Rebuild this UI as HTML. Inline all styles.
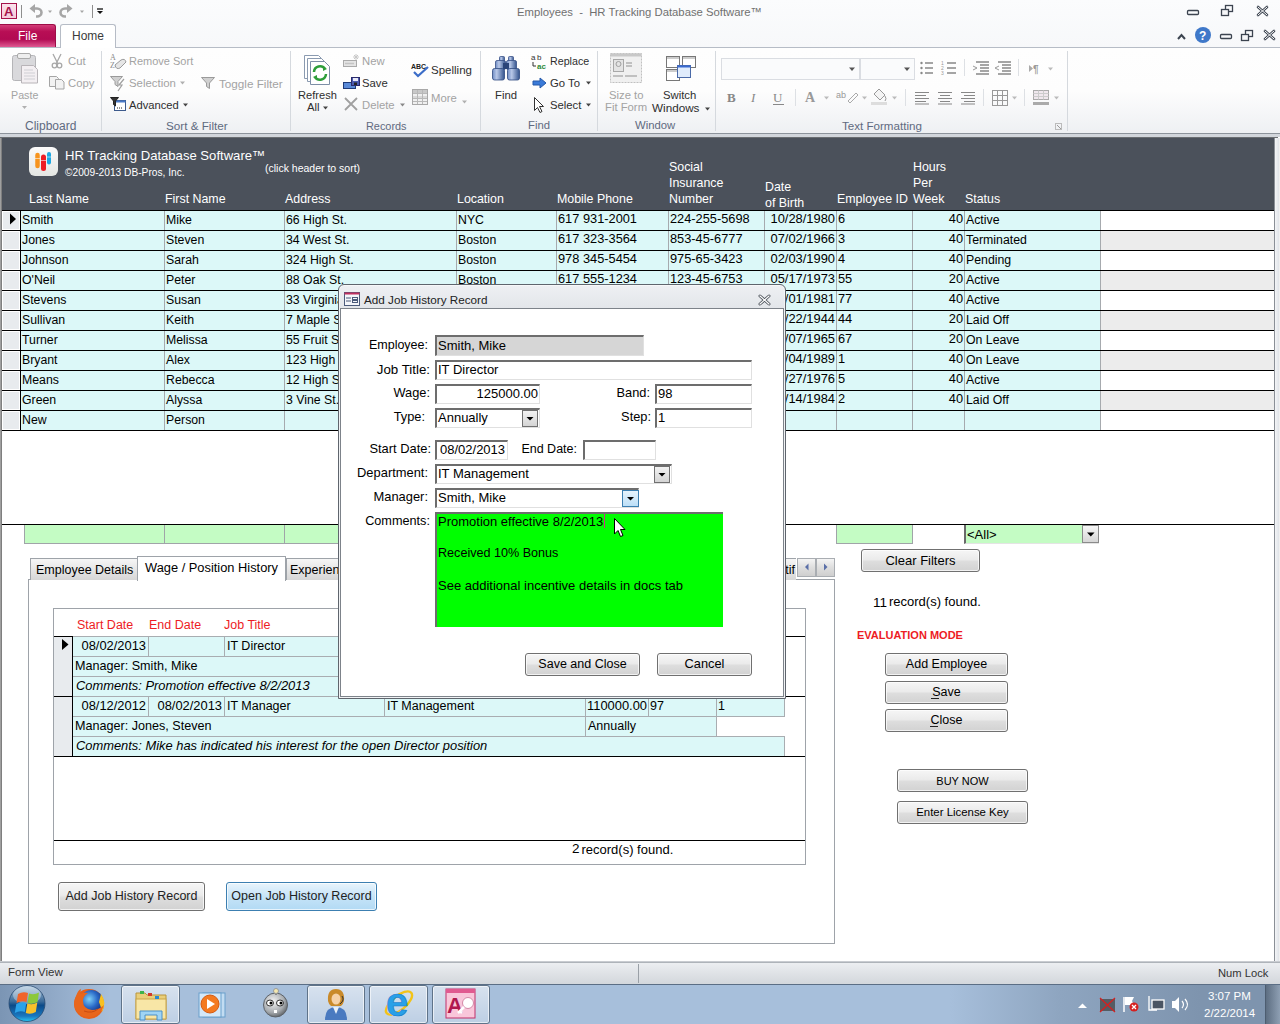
<!DOCTYPE html><html><head><meta charset="utf-8"><style>
html,body{margin:0;padding:0;width:1280px;height:1024px;overflow:hidden;background:#fff;position:relative;font-family:"Liberation Sans",sans-serif;}
.t{position:absolute;white-space:pre;line-height:1;}
.r{position:absolute;box-sizing:border-box;}
svg{position:absolute;overflow:visible;}
</style></head><body>
<div class="r" style="left:0px;top:0px;width:1280px;height:47px;background:linear-gradient(#fbfcfd,#f7f8fa);"></div>
<div class="r" style="left:1px;top:3px;width:16px;height:16px;background:linear-gradient(#fbe3ec,#f6c9d9);border:1px solid #a5124a;"></div>
<div class="t" style="left:4px;top:5.00px;font-size:13px;color:#a5124a;font-weight:bold;font-style:normal;">A</div>
<div class="r" style="left:21px;top:5px;width:1px;height:13px;background:#8e8e8e;"></div>
<div class="r" style="left:92px;top:5px;width:1px;height:13px;background:#8e8e8e;"></div>
<div class="t" style="left:517px;top:7.43px;font-size:11.3px;color:#707070;font-weight:normal;font-style:normal;">Employees  -  HR Tracking Database Software™</div>
<svg style="left:0;top:0" width="1280" height="60"><rect x="1187.5" y="10.5" width="11" height="4" rx="1" fill="none" stroke="#3c4450" stroke-width="1.3"/><rect x="1225.5" y="5.5" width="7" height="6" fill="none" stroke="#3c4450" stroke-width="1.3"/><rect x="1221.5" y="9.5" width="7" height="6" fill="#f5f6f8" stroke="#3c4450" stroke-width="1.3"/><path d="M1258 7 L1267 15 M1267 7 L1258 15" stroke="#3c4450" stroke-width="2.6" stroke-linecap="round"/><path d="M1258 7 L1267 15 M1267 7 L1258 15" stroke="#fff" stroke-width="1" stroke-linecap="round"/><path d="M1178 39 L1181.5 35 L1185 39" fill="none" stroke="#3c4450" stroke-width="2"/><circle cx="1203" cy="35" r="8" fill="#3f78c9"/><text x="1199" y="40" font-family="Liberation Sans" font-weight="bold" font-size="12" fill="#fff">?</text><rect x="1220.5" y="34.5" width="11" height="4" rx="1" fill="none" stroke="#3c4450" stroke-width="1.3"/><rect x="1245.5" y="30.5" width="7" height="6" fill="none" stroke="#3c4450" stroke-width="1.3"/><rect x="1241.5" y="34.5" width="7" height="6" fill="#f5f6f8" stroke="#3c4450" stroke-width="1.3"/><path d="M1265 31 L1274 39 M1274 31 L1265 39" stroke="#3c4450" stroke-width="2.6" stroke-linecap="round"/><path d="M1265 31 L1274 39 M1274 31 L1265 39" stroke="#fff" stroke-width="1" stroke-linecap="round"/></svg>
<div class="r" style="left:0px;top:24px;width:56px;height:23px;background:linear-gradient(#d23c78,#b80e55 30%,#b20a52 65%,#e05a92);border:1px solid #9c0c46;border-left:none;border-bottom:none;border-radius:0 3px 0 0;"></div>
<div class="t" style="left:18px;top:29.84px;font-size:12px;color:#fff;font-weight:normal;font-style:normal;">File</div>
<div class="r" style="left:0px;top:47px;width:1280px;height:1px;background:#b6bcc6;"></div>
<div class="r" style="left:60px;top:24px;width:56px;height:25px;background:#fff;border:1px solid #b6bcc6;border-bottom:none;border-radius:3px 3px 0 0;"></div>
<div class="t" style="left:72px;top:29.84px;font-size:12px;color:#3b3b3b;font-weight:normal;font-style:normal;">Home</div>
<div class="r" style="left:0px;top:48px;width:1280px;height:85px;background:linear-gradient(#fefefe 0%,#fdfdfd 50%,#eef0f3 100%);"></div>
<div class="r" style="left:0px;top:133px;width:1280px;height:1px;background:#8d939b;"></div>
<div class="r" style="left:0px;top:134px;width:1280px;height:3px;background:#d2d6dc;"></div>
<div class="r" style="left:0px;top:137px;width:1278px;height:1px;background:#6b6e72;"></div>
<div class="r" style="left:101px;top:51px;width:1px;height:80px;background:#d5d9de;"></div>
<div class="r" style="left:290px;top:51px;width:1px;height:80px;background:#d5d9de;"></div>
<div class="r" style="left:480px;top:51px;width:1px;height:80px;background:#d5d9de;"></div>
<div class="r" style="left:597px;top:51px;width:1px;height:80px;background:#d5d9de;"></div>
<div class="r" style="left:715px;top:51px;width:1px;height:80px;background:#d5d9de;"></div>
<div class="r" style="left:1067px;top:51px;width:1px;height:80px;background:#d5d9de;"></div>
<div class="r" style="left:0px;top:138px;width:1280px;height:824px;background:#fff;"></div>
<div class="r" style="left:0px;top:138px;width:2px;height:824px;background:linear-gradient(90deg,#b0b0b0,#6e6e6e);"></div>
<div class="r" style="left:1274px;top:138px;width:1px;height:824px;background:#8a8f96;"></div>
<div class="r" style="left:1275px;top:138px;width:4px;height:824px;background:linear-gradient(90deg,#f4f5f7,#dfe3e8);"></div>
<div class="r" style="left:1279px;top:138px;width:1px;height:824px;background:#f0f0f0;"></div>
<div class="r" style="left:2px;top:138px;width:1272px;height:72px;background:#4b515b;"></div>
<div class="r" style="left:29px;top:147px;width:29px;height:29px;border-radius:6px;background:linear-gradient(#fafafa,#e4e6e3);"></div>
<svg style="left:29px;top:147px" width="29" height="29"><line x1="8.5" y1="8" x2="8.5" y2="19" stroke="#f7941d" stroke-width="4.5" stroke-linecap="round"/><line x1="14.5" y1="10" x2="14.5" y2="21.5" stroke="#ed1c24" stroke-width="5" stroke-linecap="round"/><line x1="20" y1="7" x2="20" y2="15.5" stroke="#1ea7e1" stroke-width="4" stroke-linecap="round"/><path d="M6 11.5 h5 M12 13.5 h5 M18 10 h4" stroke="#fff" stroke-width="0.8" opacity="0.7"/></svg>
<div class="t" style="left:65px;top:148.91px;font-size:13.1px;color:#fff;font-weight:normal;font-style:normal;">HR Tracking Database Software™</div>
<div class="t" style="left:65px;top:167.87px;font-size:10.2px;color:#fff;font-weight:normal;font-style:normal;">©2009-2013 DB-Pros, Inc.</div>
<div class="t" style="left:265px;top:163.11px;font-size:10.5px;color:#fff;font-weight:normal;font-style:normal;">(click header to sort)</div>
<div class="t" style="left:29px;top:192.50px;font-size:12.4px;color:#fff;font-weight:normal;font-style:normal;">Last Name</div>
<div class="t" style="left:165px;top:192.50px;font-size:12.4px;color:#fff;font-weight:normal;font-style:normal;">First Name</div>
<div class="t" style="left:285px;top:192.50px;font-size:12.4px;color:#fff;font-weight:normal;font-style:normal;">Address</div>
<div class="t" style="left:457px;top:192.50px;font-size:12.4px;color:#fff;font-weight:normal;font-style:normal;">Location</div>
<div class="t" style="left:557px;top:192.50px;font-size:12.4px;color:#fff;font-weight:normal;font-style:normal;">Mobile Phone</div>
<div class="t" style="left:837px;top:192.50px;font-size:12.4px;color:#fff;font-weight:normal;font-style:normal;">Employee ID</div>
<div class="t" style="left:965px;top:192.50px;font-size:12.4px;color:#fff;font-weight:normal;font-style:normal;">Status</div>
<div class="t" style="left:669px;top:160.50px;font-size:12.4px;color:#fff;font-weight:normal;font-style:normal;">Social</div>
<div class="t" style="left:669px;top:176.50px;font-size:12.4px;color:#fff;font-weight:normal;font-style:normal;">Insurance</div>
<div class="t" style="left:669px;top:192.50px;font-size:12.4px;color:#fff;font-weight:normal;font-style:normal;">Number</div>
<div class="t" style="left:765px;top:180.50px;font-size:12.4px;color:#fff;font-weight:normal;font-style:normal;">Date</div>
<div class="t" style="left:765px;top:196.50px;font-size:12.4px;color:#fff;font-weight:normal;font-style:normal;">of Birth</div>
<div class="t" style="left:913px;top:160.50px;font-size:12.4px;color:#fff;font-weight:normal;font-style:normal;">Hours</div>
<div class="t" style="left:913px;top:176.50px;font-size:12.4px;color:#fff;font-weight:normal;font-style:normal;">Per</div>
<div class="t" style="left:913px;top:192.50px;font-size:12.4px;color:#fff;font-weight:normal;font-style:normal;">Week</div>
<div class="r" style="left:2px;top:210px;width:1272px;height:1px;background:#000;"></div>
<div class="r" style="left:2px;top:211px;width:18px;height:19px;background:#e8ebee;border:1px solid #fff;"></div>
<div class="r" style="left:20px;top:211px;width:1px;height:19px;background:#000;"></div>
<div class="r" style="left:21px;top:211px;width:1079px;height:19px;background:#dcf8f8;"></div>
<div class="r" style="left:1100px;top:211px;width:174px;height:19px;background:#fff;"></div>
<div class="r" style="left:164px;top:211px;width:1px;height:19px;background:#a6aaae;"></div>
<div class="r" style="left:284px;top:211px;width:1px;height:19px;background:#a6aaae;"></div>
<div class="r" style="left:456px;top:211px;width:1px;height:19px;background:#a6aaae;"></div>
<div class="r" style="left:556px;top:211px;width:1px;height:19px;background:#a6aaae;"></div>
<div class="r" style="left:668px;top:211px;width:1px;height:19px;background:#a6aaae;"></div>
<div class="r" style="left:764px;top:211px;width:1px;height:19px;background:#a6aaae;"></div>
<div class="r" style="left:836px;top:211px;width:1px;height:19px;background:#a6aaae;"></div>
<div class="r" style="left:912px;top:211px;width:1px;height:19px;background:#a6aaae;"></div>
<div class="r" style="left:964px;top:211px;width:1px;height:19px;background:#a6aaae;"></div>
<div class="r" style="left:1100px;top:211px;width:1px;height:19px;background:#a6aaae;"></div>
<div class="t" style="left:22px;top:213.59px;font-size:12.3px;color:#000;font-weight:normal;font-style:normal;">Smith</div>
<div class="t" style="left:166px;top:213.59px;font-size:12.3px;color:#000;font-weight:normal;font-style:normal;">Mike</div>
<div class="t" style="left:286px;top:213.59px;font-size:12.3px;color:#000;font-weight:normal;font-style:normal;">66 High St.</div>
<div class="t" style="left:458px;top:213.59px;font-size:12.3px;color:#000;font-weight:normal;font-style:normal;">NYC</div>
<div class="t" style="left:558px;top:213.16px;font-size:12.8px;color:#000;font-weight:normal;font-style:normal;">617 931-2001</div>
<div class="t" style="left:670px;top:213.16px;font-size:12.8px;color:#000;font-weight:normal;font-style:normal;">224-255-5698</div>
<div class="t" style="width:80px;text-align:right;left:755px;top:213.08px;font-size:12.9px;color:#000;font-weight:normal;font-style:normal;">10/28/1980</div>
<div class="t" style="left:838px;top:213.16px;font-size:12.8px;color:#000;font-weight:normal;font-style:normal;">6</div>
<div class="t" style="width:40px;text-align:right;left:923px;top:213.16px;font-size:12.8px;color:#000;font-weight:normal;font-style:normal;">40</div>
<div class="t" style="left:966px;top:213.59px;font-size:12.3px;color:#000;font-weight:normal;font-style:normal;">Active</div>
<div class="r" style="left:2px;top:230px;width:1272px;height:1px;background:#000;"></div>
<div class="r" style="left:2px;top:231px;width:18px;height:19px;background:#e8ebee;border:1px solid #fff;"></div>
<div class="r" style="left:20px;top:231px;width:1px;height:19px;background:#000;"></div>
<div class="r" style="left:21px;top:231px;width:1079px;height:19px;background:#dcf8f8;"></div>
<div class="r" style="left:1100px;top:231px;width:174px;height:19px;background:#ececec;"></div>
<div class="r" style="left:164px;top:231px;width:1px;height:19px;background:#a6aaae;"></div>
<div class="r" style="left:284px;top:231px;width:1px;height:19px;background:#a6aaae;"></div>
<div class="r" style="left:456px;top:231px;width:1px;height:19px;background:#a6aaae;"></div>
<div class="r" style="left:556px;top:231px;width:1px;height:19px;background:#a6aaae;"></div>
<div class="r" style="left:668px;top:231px;width:1px;height:19px;background:#a6aaae;"></div>
<div class="r" style="left:764px;top:231px;width:1px;height:19px;background:#a6aaae;"></div>
<div class="r" style="left:836px;top:231px;width:1px;height:19px;background:#a6aaae;"></div>
<div class="r" style="left:912px;top:231px;width:1px;height:19px;background:#a6aaae;"></div>
<div class="r" style="left:964px;top:231px;width:1px;height:19px;background:#a6aaae;"></div>
<div class="r" style="left:1100px;top:231px;width:1px;height:19px;background:#a6aaae;"></div>
<div class="t" style="left:22px;top:233.59px;font-size:12.3px;color:#000;font-weight:normal;font-style:normal;">Jones</div>
<div class="t" style="left:166px;top:233.59px;font-size:12.3px;color:#000;font-weight:normal;font-style:normal;">Steven</div>
<div class="t" style="left:286px;top:233.59px;font-size:12.3px;color:#000;font-weight:normal;font-style:normal;">34 West St.</div>
<div class="t" style="left:458px;top:233.59px;font-size:12.3px;color:#000;font-weight:normal;font-style:normal;">Boston</div>
<div class="t" style="left:558px;top:233.16px;font-size:12.8px;color:#000;font-weight:normal;font-style:normal;">617 323-3564</div>
<div class="t" style="left:670px;top:233.16px;font-size:12.8px;color:#000;font-weight:normal;font-style:normal;">853-45-6777</div>
<div class="t" style="width:80px;text-align:right;left:755px;top:233.08px;font-size:12.9px;color:#000;font-weight:normal;font-style:normal;">07/02/1966</div>
<div class="t" style="left:838px;top:233.16px;font-size:12.8px;color:#000;font-weight:normal;font-style:normal;">3</div>
<div class="t" style="width:40px;text-align:right;left:923px;top:233.16px;font-size:12.8px;color:#000;font-weight:normal;font-style:normal;">40</div>
<div class="t" style="left:966px;top:233.59px;font-size:12.3px;color:#000;font-weight:normal;font-style:normal;">Terminated</div>
<div class="r" style="left:2px;top:250px;width:1272px;height:1px;background:#000;"></div>
<div class="r" style="left:2px;top:251px;width:18px;height:19px;background:#e8ebee;border:1px solid #fff;"></div>
<div class="r" style="left:20px;top:251px;width:1px;height:19px;background:#000;"></div>
<div class="r" style="left:21px;top:251px;width:1079px;height:19px;background:#dcf8f8;"></div>
<div class="r" style="left:1100px;top:251px;width:174px;height:19px;background:#fff;"></div>
<div class="r" style="left:164px;top:251px;width:1px;height:19px;background:#a6aaae;"></div>
<div class="r" style="left:284px;top:251px;width:1px;height:19px;background:#a6aaae;"></div>
<div class="r" style="left:456px;top:251px;width:1px;height:19px;background:#a6aaae;"></div>
<div class="r" style="left:556px;top:251px;width:1px;height:19px;background:#a6aaae;"></div>
<div class="r" style="left:668px;top:251px;width:1px;height:19px;background:#a6aaae;"></div>
<div class="r" style="left:764px;top:251px;width:1px;height:19px;background:#a6aaae;"></div>
<div class="r" style="left:836px;top:251px;width:1px;height:19px;background:#a6aaae;"></div>
<div class="r" style="left:912px;top:251px;width:1px;height:19px;background:#a6aaae;"></div>
<div class="r" style="left:964px;top:251px;width:1px;height:19px;background:#a6aaae;"></div>
<div class="r" style="left:1100px;top:251px;width:1px;height:19px;background:#a6aaae;"></div>
<div class="t" style="left:22px;top:253.59px;font-size:12.3px;color:#000;font-weight:normal;font-style:normal;">Johnson</div>
<div class="t" style="left:166px;top:253.59px;font-size:12.3px;color:#000;font-weight:normal;font-style:normal;">Sarah</div>
<div class="t" style="left:286px;top:253.59px;font-size:12.3px;color:#000;font-weight:normal;font-style:normal;">324 High St.</div>
<div class="t" style="left:458px;top:253.59px;font-size:12.3px;color:#000;font-weight:normal;font-style:normal;">Boston</div>
<div class="t" style="left:558px;top:253.16px;font-size:12.8px;color:#000;font-weight:normal;font-style:normal;">978 345-5454</div>
<div class="t" style="left:670px;top:253.16px;font-size:12.8px;color:#000;font-weight:normal;font-style:normal;">975-65-3423</div>
<div class="t" style="width:80px;text-align:right;left:755px;top:253.08px;font-size:12.9px;color:#000;font-weight:normal;font-style:normal;">02/03/1990</div>
<div class="t" style="left:838px;top:253.16px;font-size:12.8px;color:#000;font-weight:normal;font-style:normal;">4</div>
<div class="t" style="width:40px;text-align:right;left:923px;top:253.16px;font-size:12.8px;color:#000;font-weight:normal;font-style:normal;">40</div>
<div class="t" style="left:966px;top:253.59px;font-size:12.3px;color:#000;font-weight:normal;font-style:normal;">Pending</div>
<div class="r" style="left:2px;top:270px;width:1272px;height:1px;background:#000;"></div>
<div class="r" style="left:2px;top:271px;width:18px;height:19px;background:#e8ebee;border:1px solid #fff;"></div>
<div class="r" style="left:20px;top:271px;width:1px;height:19px;background:#000;"></div>
<div class="r" style="left:21px;top:271px;width:1079px;height:19px;background:#dcf8f8;"></div>
<div class="r" style="left:1100px;top:271px;width:174px;height:19px;background:#ececec;"></div>
<div class="r" style="left:164px;top:271px;width:1px;height:19px;background:#a6aaae;"></div>
<div class="r" style="left:284px;top:271px;width:1px;height:19px;background:#a6aaae;"></div>
<div class="r" style="left:456px;top:271px;width:1px;height:19px;background:#a6aaae;"></div>
<div class="r" style="left:556px;top:271px;width:1px;height:19px;background:#a6aaae;"></div>
<div class="r" style="left:668px;top:271px;width:1px;height:19px;background:#a6aaae;"></div>
<div class="r" style="left:764px;top:271px;width:1px;height:19px;background:#a6aaae;"></div>
<div class="r" style="left:836px;top:271px;width:1px;height:19px;background:#a6aaae;"></div>
<div class="r" style="left:912px;top:271px;width:1px;height:19px;background:#a6aaae;"></div>
<div class="r" style="left:964px;top:271px;width:1px;height:19px;background:#a6aaae;"></div>
<div class="r" style="left:1100px;top:271px;width:1px;height:19px;background:#a6aaae;"></div>
<div class="t" style="left:22px;top:273.59px;font-size:12.3px;color:#000;font-weight:normal;font-style:normal;">O&#x27;Neil</div>
<div class="t" style="left:166px;top:273.59px;font-size:12.3px;color:#000;font-weight:normal;font-style:normal;">Peter</div>
<div class="t" style="left:286px;top:273.59px;font-size:12.3px;color:#000;font-weight:normal;font-style:normal;">88 Oak St.</div>
<div class="t" style="left:458px;top:273.59px;font-size:12.3px;color:#000;font-weight:normal;font-style:normal;">Boston</div>
<div class="t" style="left:558px;top:273.16px;font-size:12.8px;color:#000;font-weight:normal;font-style:normal;">617 555-1234</div>
<div class="t" style="left:670px;top:273.16px;font-size:12.8px;color:#000;font-weight:normal;font-style:normal;">123-45-6753</div>
<div class="t" style="width:80px;text-align:right;left:755px;top:273.08px;font-size:12.9px;color:#000;font-weight:normal;font-style:normal;">05/17/1973</div>
<div class="t" style="left:838px;top:273.16px;font-size:12.8px;color:#000;font-weight:normal;font-style:normal;">55</div>
<div class="t" style="width:40px;text-align:right;left:923px;top:273.16px;font-size:12.8px;color:#000;font-weight:normal;font-style:normal;">20</div>
<div class="t" style="left:966px;top:273.59px;font-size:12.3px;color:#000;font-weight:normal;font-style:normal;">Active</div>
<div class="r" style="left:2px;top:290px;width:1272px;height:1px;background:#000;"></div>
<div class="r" style="left:2px;top:291px;width:18px;height:19px;background:#e8ebee;border:1px solid #fff;"></div>
<div class="r" style="left:20px;top:291px;width:1px;height:19px;background:#000;"></div>
<div class="r" style="left:21px;top:291px;width:1079px;height:19px;background:#dcf8f8;"></div>
<div class="r" style="left:1100px;top:291px;width:174px;height:19px;background:#fff;"></div>
<div class="r" style="left:164px;top:291px;width:1px;height:19px;background:#a6aaae;"></div>
<div class="r" style="left:284px;top:291px;width:1px;height:19px;background:#a6aaae;"></div>
<div class="r" style="left:456px;top:291px;width:1px;height:19px;background:#a6aaae;"></div>
<div class="r" style="left:556px;top:291px;width:1px;height:19px;background:#a6aaae;"></div>
<div class="r" style="left:668px;top:291px;width:1px;height:19px;background:#a6aaae;"></div>
<div class="r" style="left:764px;top:291px;width:1px;height:19px;background:#a6aaae;"></div>
<div class="r" style="left:836px;top:291px;width:1px;height:19px;background:#a6aaae;"></div>
<div class="r" style="left:912px;top:291px;width:1px;height:19px;background:#a6aaae;"></div>
<div class="r" style="left:964px;top:291px;width:1px;height:19px;background:#a6aaae;"></div>
<div class="r" style="left:1100px;top:291px;width:1px;height:19px;background:#a6aaae;"></div>
<div class="t" style="left:22px;top:293.59px;font-size:12.3px;color:#000;font-weight:normal;font-style:normal;">Stevens</div>
<div class="t" style="left:166px;top:293.59px;font-size:12.3px;color:#000;font-weight:normal;font-style:normal;">Susan</div>
<div class="t" style="left:286px;top:293.59px;font-size:12.3px;color:#000;font-weight:normal;font-style:normal;">33 Virginia St.</div>
<div class="t" style="left:458px;top:293.59px;font-size:12.3px;color:#000;font-weight:normal;font-style:normal;">Boston</div>
<div class="t" style="left:558px;top:293.16px;font-size:12.8px;color:#000;font-weight:normal;font-style:normal;">617 555-1234</div>
<div class="t" style="left:670px;top:293.16px;font-size:12.8px;color:#000;font-weight:normal;font-style:normal;">123-45-6753</div>
<div class="t" style="width:80px;text-align:right;left:755px;top:293.08px;font-size:12.9px;color:#000;font-weight:normal;font-style:normal;">06/01/1981</div>
<div class="t" style="left:838px;top:293.16px;font-size:12.8px;color:#000;font-weight:normal;font-style:normal;">77</div>
<div class="t" style="width:40px;text-align:right;left:923px;top:293.16px;font-size:12.8px;color:#000;font-weight:normal;font-style:normal;">40</div>
<div class="t" style="left:966px;top:293.59px;font-size:12.3px;color:#000;font-weight:normal;font-style:normal;">Active</div>
<div class="r" style="left:2px;top:310px;width:1272px;height:1px;background:#000;"></div>
<div class="r" style="left:2px;top:311px;width:18px;height:19px;background:#e8ebee;border:1px solid #fff;"></div>
<div class="r" style="left:20px;top:311px;width:1px;height:19px;background:#000;"></div>
<div class="r" style="left:21px;top:311px;width:1079px;height:19px;background:#dcf8f8;"></div>
<div class="r" style="left:1100px;top:311px;width:174px;height:19px;background:#ececec;"></div>
<div class="r" style="left:164px;top:311px;width:1px;height:19px;background:#a6aaae;"></div>
<div class="r" style="left:284px;top:311px;width:1px;height:19px;background:#a6aaae;"></div>
<div class="r" style="left:456px;top:311px;width:1px;height:19px;background:#a6aaae;"></div>
<div class="r" style="left:556px;top:311px;width:1px;height:19px;background:#a6aaae;"></div>
<div class="r" style="left:668px;top:311px;width:1px;height:19px;background:#a6aaae;"></div>
<div class="r" style="left:764px;top:311px;width:1px;height:19px;background:#a6aaae;"></div>
<div class="r" style="left:836px;top:311px;width:1px;height:19px;background:#a6aaae;"></div>
<div class="r" style="left:912px;top:311px;width:1px;height:19px;background:#a6aaae;"></div>
<div class="r" style="left:964px;top:311px;width:1px;height:19px;background:#a6aaae;"></div>
<div class="r" style="left:1100px;top:311px;width:1px;height:19px;background:#a6aaae;"></div>
<div class="t" style="left:22px;top:313.59px;font-size:12.3px;color:#000;font-weight:normal;font-style:normal;">Sullivan</div>
<div class="t" style="left:166px;top:313.59px;font-size:12.3px;color:#000;font-weight:normal;font-style:normal;">Keith</div>
<div class="t" style="left:286px;top:313.59px;font-size:12.3px;color:#000;font-weight:normal;font-style:normal;">7 Maple St.</div>
<div class="t" style="left:458px;top:313.59px;font-size:12.3px;color:#000;font-weight:normal;font-style:normal;">Boston</div>
<div class="t" style="left:558px;top:313.16px;font-size:12.8px;color:#000;font-weight:normal;font-style:normal;">617 555-1234</div>
<div class="t" style="left:670px;top:313.16px;font-size:12.8px;color:#000;font-weight:normal;font-style:normal;">123-45-6753</div>
<div class="t" style="width:80px;text-align:right;left:755px;top:313.08px;font-size:12.9px;color:#000;font-weight:normal;font-style:normal;">01/22/1944</div>
<div class="t" style="left:838px;top:313.16px;font-size:12.8px;color:#000;font-weight:normal;font-style:normal;">44</div>
<div class="t" style="width:40px;text-align:right;left:923px;top:313.16px;font-size:12.8px;color:#000;font-weight:normal;font-style:normal;">20</div>
<div class="t" style="left:966px;top:313.59px;font-size:12.3px;color:#000;font-weight:normal;font-style:normal;">Laid Off</div>
<div class="r" style="left:2px;top:330px;width:1272px;height:1px;background:#000;"></div>
<div class="r" style="left:2px;top:331px;width:18px;height:19px;background:#e8ebee;border:1px solid #fff;"></div>
<div class="r" style="left:20px;top:331px;width:1px;height:19px;background:#000;"></div>
<div class="r" style="left:21px;top:331px;width:1079px;height:19px;background:#dcf8f8;"></div>
<div class="r" style="left:1100px;top:331px;width:174px;height:19px;background:#fff;"></div>
<div class="r" style="left:164px;top:331px;width:1px;height:19px;background:#a6aaae;"></div>
<div class="r" style="left:284px;top:331px;width:1px;height:19px;background:#a6aaae;"></div>
<div class="r" style="left:456px;top:331px;width:1px;height:19px;background:#a6aaae;"></div>
<div class="r" style="left:556px;top:331px;width:1px;height:19px;background:#a6aaae;"></div>
<div class="r" style="left:668px;top:331px;width:1px;height:19px;background:#a6aaae;"></div>
<div class="r" style="left:764px;top:331px;width:1px;height:19px;background:#a6aaae;"></div>
<div class="r" style="left:836px;top:331px;width:1px;height:19px;background:#a6aaae;"></div>
<div class="r" style="left:912px;top:331px;width:1px;height:19px;background:#a6aaae;"></div>
<div class="r" style="left:964px;top:331px;width:1px;height:19px;background:#a6aaae;"></div>
<div class="r" style="left:1100px;top:331px;width:1px;height:19px;background:#a6aaae;"></div>
<div class="t" style="left:22px;top:333.59px;font-size:12.3px;color:#000;font-weight:normal;font-style:normal;">Turner</div>
<div class="t" style="left:166px;top:333.59px;font-size:12.3px;color:#000;font-weight:normal;font-style:normal;">Melissa</div>
<div class="t" style="left:286px;top:333.59px;font-size:12.3px;color:#000;font-weight:normal;font-style:normal;">55 Fruit St.</div>
<div class="t" style="left:458px;top:333.59px;font-size:12.3px;color:#000;font-weight:normal;font-style:normal;">Boston</div>
<div class="t" style="left:558px;top:333.16px;font-size:12.8px;color:#000;font-weight:normal;font-style:normal;">617 555-1234</div>
<div class="t" style="left:670px;top:333.16px;font-size:12.8px;color:#000;font-weight:normal;font-style:normal;">123-45-6753</div>
<div class="t" style="width:80px;text-align:right;left:755px;top:333.08px;font-size:12.9px;color:#000;font-weight:normal;font-style:normal;">02/07/1965</div>
<div class="t" style="left:838px;top:333.16px;font-size:12.8px;color:#000;font-weight:normal;font-style:normal;">67</div>
<div class="t" style="width:40px;text-align:right;left:923px;top:333.16px;font-size:12.8px;color:#000;font-weight:normal;font-style:normal;">20</div>
<div class="t" style="left:966px;top:333.59px;font-size:12.3px;color:#000;font-weight:normal;font-style:normal;">On Leave</div>
<div class="r" style="left:2px;top:350px;width:1272px;height:1px;background:#000;"></div>
<div class="r" style="left:2px;top:351px;width:18px;height:19px;background:#e8ebee;border:1px solid #fff;"></div>
<div class="r" style="left:20px;top:351px;width:1px;height:19px;background:#000;"></div>
<div class="r" style="left:21px;top:351px;width:1079px;height:19px;background:#dcf8f8;"></div>
<div class="r" style="left:1100px;top:351px;width:174px;height:19px;background:#ececec;"></div>
<div class="r" style="left:164px;top:351px;width:1px;height:19px;background:#a6aaae;"></div>
<div class="r" style="left:284px;top:351px;width:1px;height:19px;background:#a6aaae;"></div>
<div class="r" style="left:456px;top:351px;width:1px;height:19px;background:#a6aaae;"></div>
<div class="r" style="left:556px;top:351px;width:1px;height:19px;background:#a6aaae;"></div>
<div class="r" style="left:668px;top:351px;width:1px;height:19px;background:#a6aaae;"></div>
<div class="r" style="left:764px;top:351px;width:1px;height:19px;background:#a6aaae;"></div>
<div class="r" style="left:836px;top:351px;width:1px;height:19px;background:#a6aaae;"></div>
<div class="r" style="left:912px;top:351px;width:1px;height:19px;background:#a6aaae;"></div>
<div class="r" style="left:964px;top:351px;width:1px;height:19px;background:#a6aaae;"></div>
<div class="r" style="left:1100px;top:351px;width:1px;height:19px;background:#a6aaae;"></div>
<div class="t" style="left:22px;top:353.59px;font-size:12.3px;color:#000;font-weight:normal;font-style:normal;">Bryant</div>
<div class="t" style="left:166px;top:353.59px;font-size:12.3px;color:#000;font-weight:normal;font-style:normal;">Alex</div>
<div class="t" style="left:286px;top:353.59px;font-size:12.3px;color:#000;font-weight:normal;font-style:normal;">123 High St.</div>
<div class="t" style="left:458px;top:353.59px;font-size:12.3px;color:#000;font-weight:normal;font-style:normal;">Boston</div>
<div class="t" style="left:558px;top:353.16px;font-size:12.8px;color:#000;font-weight:normal;font-style:normal;">617 555-1234</div>
<div class="t" style="left:670px;top:353.16px;font-size:12.8px;color:#000;font-weight:normal;font-style:normal;">123-45-6753</div>
<div class="t" style="width:80px;text-align:right;left:755px;top:353.08px;font-size:12.9px;color:#000;font-weight:normal;font-style:normal;">03/04/1989</div>
<div class="t" style="left:838px;top:353.16px;font-size:12.8px;color:#000;font-weight:normal;font-style:normal;">1</div>
<div class="t" style="width:40px;text-align:right;left:923px;top:353.16px;font-size:12.8px;color:#000;font-weight:normal;font-style:normal;">40</div>
<div class="t" style="left:966px;top:353.59px;font-size:12.3px;color:#000;font-weight:normal;font-style:normal;">On Leave</div>
<div class="r" style="left:2px;top:370px;width:1272px;height:1px;background:#000;"></div>
<div class="r" style="left:2px;top:371px;width:18px;height:19px;background:#e8ebee;border:1px solid #fff;"></div>
<div class="r" style="left:20px;top:371px;width:1px;height:19px;background:#000;"></div>
<div class="r" style="left:21px;top:371px;width:1079px;height:19px;background:#dcf8f8;"></div>
<div class="r" style="left:1100px;top:371px;width:174px;height:19px;background:#fff;"></div>
<div class="r" style="left:164px;top:371px;width:1px;height:19px;background:#a6aaae;"></div>
<div class="r" style="left:284px;top:371px;width:1px;height:19px;background:#a6aaae;"></div>
<div class="r" style="left:456px;top:371px;width:1px;height:19px;background:#a6aaae;"></div>
<div class="r" style="left:556px;top:371px;width:1px;height:19px;background:#a6aaae;"></div>
<div class="r" style="left:668px;top:371px;width:1px;height:19px;background:#a6aaae;"></div>
<div class="r" style="left:764px;top:371px;width:1px;height:19px;background:#a6aaae;"></div>
<div class="r" style="left:836px;top:371px;width:1px;height:19px;background:#a6aaae;"></div>
<div class="r" style="left:912px;top:371px;width:1px;height:19px;background:#a6aaae;"></div>
<div class="r" style="left:964px;top:371px;width:1px;height:19px;background:#a6aaae;"></div>
<div class="r" style="left:1100px;top:371px;width:1px;height:19px;background:#a6aaae;"></div>
<div class="t" style="left:22px;top:373.59px;font-size:12.3px;color:#000;font-weight:normal;font-style:normal;">Means</div>
<div class="t" style="left:166px;top:373.59px;font-size:12.3px;color:#000;font-weight:normal;font-style:normal;">Rebecca</div>
<div class="t" style="left:286px;top:373.59px;font-size:12.3px;color:#000;font-weight:normal;font-style:normal;">12 High St.</div>
<div class="t" style="left:458px;top:373.59px;font-size:12.3px;color:#000;font-weight:normal;font-style:normal;">Boston</div>
<div class="t" style="left:558px;top:373.16px;font-size:12.8px;color:#000;font-weight:normal;font-style:normal;">617 555-1234</div>
<div class="t" style="left:670px;top:373.16px;font-size:12.8px;color:#000;font-weight:normal;font-style:normal;">123-45-6753</div>
<div class="t" style="width:80px;text-align:right;left:755px;top:373.08px;font-size:12.9px;color:#000;font-weight:normal;font-style:normal;">04/27/1976</div>
<div class="t" style="left:838px;top:373.16px;font-size:12.8px;color:#000;font-weight:normal;font-style:normal;">5</div>
<div class="t" style="width:40px;text-align:right;left:923px;top:373.16px;font-size:12.8px;color:#000;font-weight:normal;font-style:normal;">40</div>
<div class="t" style="left:966px;top:373.59px;font-size:12.3px;color:#000;font-weight:normal;font-style:normal;">Active</div>
<div class="r" style="left:2px;top:390px;width:1272px;height:1px;background:#000;"></div>
<div class="r" style="left:2px;top:391px;width:18px;height:19px;background:#e8ebee;border:1px solid #fff;"></div>
<div class="r" style="left:20px;top:391px;width:1px;height:19px;background:#000;"></div>
<div class="r" style="left:21px;top:391px;width:1079px;height:19px;background:#dcf8f8;"></div>
<div class="r" style="left:1100px;top:391px;width:174px;height:19px;background:#ececec;"></div>
<div class="r" style="left:164px;top:391px;width:1px;height:19px;background:#a6aaae;"></div>
<div class="r" style="left:284px;top:391px;width:1px;height:19px;background:#a6aaae;"></div>
<div class="r" style="left:456px;top:391px;width:1px;height:19px;background:#a6aaae;"></div>
<div class="r" style="left:556px;top:391px;width:1px;height:19px;background:#a6aaae;"></div>
<div class="r" style="left:668px;top:391px;width:1px;height:19px;background:#a6aaae;"></div>
<div class="r" style="left:764px;top:391px;width:1px;height:19px;background:#a6aaae;"></div>
<div class="r" style="left:836px;top:391px;width:1px;height:19px;background:#a6aaae;"></div>
<div class="r" style="left:912px;top:391px;width:1px;height:19px;background:#a6aaae;"></div>
<div class="r" style="left:964px;top:391px;width:1px;height:19px;background:#a6aaae;"></div>
<div class="r" style="left:1100px;top:391px;width:1px;height:19px;background:#a6aaae;"></div>
<div class="t" style="left:22px;top:393.59px;font-size:12.3px;color:#000;font-weight:normal;font-style:normal;">Green</div>
<div class="t" style="left:166px;top:393.59px;font-size:12.3px;color:#000;font-weight:normal;font-style:normal;">Alyssa</div>
<div class="t" style="left:286px;top:393.59px;font-size:12.3px;color:#000;font-weight:normal;font-style:normal;">3 Vine St.</div>
<div class="t" style="left:458px;top:393.59px;font-size:12.3px;color:#000;font-weight:normal;font-style:normal;">Boston</div>
<div class="t" style="left:558px;top:393.16px;font-size:12.8px;color:#000;font-weight:normal;font-style:normal;">617 555-1234</div>
<div class="t" style="left:670px;top:393.16px;font-size:12.8px;color:#000;font-weight:normal;font-style:normal;">123-45-6753</div>
<div class="t" style="width:80px;text-align:right;left:755px;top:393.08px;font-size:12.9px;color:#000;font-weight:normal;font-style:normal;">05/14/1984</div>
<div class="t" style="left:838px;top:393.16px;font-size:12.8px;color:#000;font-weight:normal;font-style:normal;">2</div>
<div class="t" style="width:40px;text-align:right;left:923px;top:393.16px;font-size:12.8px;color:#000;font-weight:normal;font-style:normal;">40</div>
<div class="t" style="left:966px;top:393.59px;font-size:12.3px;color:#000;font-weight:normal;font-style:normal;">Laid Off</div>
<div class="r" style="left:2px;top:410px;width:1272px;height:1px;background:#000;"></div>
<div class="r" style="left:2px;top:411px;width:18px;height:19px;background:#e8ebee;border:1px solid #fff;"></div>
<div class="r" style="left:20px;top:411px;width:1px;height:19px;background:#000;"></div>
<div class="r" style="left:21px;top:411px;width:1079px;height:19px;background:#dcf8f8;"></div>
<div class="r" style="left:1100px;top:411px;width:174px;height:19px;background:#fff;"></div>
<div class="r" style="left:164px;top:411px;width:1px;height:19px;background:#a6aaae;"></div>
<div class="r" style="left:284px;top:411px;width:1px;height:19px;background:#a6aaae;"></div>
<div class="r" style="left:456px;top:411px;width:1px;height:19px;background:#a6aaae;"></div>
<div class="r" style="left:556px;top:411px;width:1px;height:19px;background:#a6aaae;"></div>
<div class="r" style="left:668px;top:411px;width:1px;height:19px;background:#a6aaae;"></div>
<div class="r" style="left:764px;top:411px;width:1px;height:19px;background:#a6aaae;"></div>
<div class="r" style="left:836px;top:411px;width:1px;height:19px;background:#a6aaae;"></div>
<div class="r" style="left:912px;top:411px;width:1px;height:19px;background:#a6aaae;"></div>
<div class="r" style="left:964px;top:411px;width:1px;height:19px;background:#a6aaae;"></div>
<div class="r" style="left:1100px;top:411px;width:1px;height:19px;background:#a6aaae;"></div>
<div class="t" style="left:22px;top:413.59px;font-size:12.3px;color:#000;font-weight:normal;font-style:normal;">New</div>
<div class="t" style="left:166px;top:413.59px;font-size:12.3px;color:#000;font-weight:normal;font-style:normal;">Person</div>
<div class="t" style="left:286px;top:413.59px;font-size:12.3px;color:#000;font-weight:normal;font-style:normal;"></div>
<div class="t" style="left:458px;top:413.59px;font-size:12.3px;color:#000;font-weight:normal;font-style:normal;"></div>
<div class="t" style="left:558px;top:413.16px;font-size:12.8px;color:#000;font-weight:normal;font-style:normal;"></div>
<div class="t" style="left:670px;top:413.16px;font-size:12.8px;color:#000;font-weight:normal;font-style:normal;"></div>
<div class="t" style="width:80px;text-align:right;left:755px;top:413.08px;font-size:12.9px;color:#000;font-weight:normal;font-style:normal;"></div>
<div class="t" style="left:838px;top:413.16px;font-size:12.8px;color:#000;font-weight:normal;font-style:normal;"></div>
<div class="t" style="width:40px;text-align:right;left:923px;top:413.16px;font-size:12.8px;color:#000;font-weight:normal;font-style:normal;"></div>
<div class="t" style="left:966px;top:413.59px;font-size:12.3px;color:#000;font-weight:normal;font-style:normal;"></div>
<div class="r" style="left:2px;top:430px;width:1272px;height:1px;background:#000;"></div>
<div class="r" style="left:20px;top:210px;width:1px;height:220px;background:#000;"></div>
<svg style="left:0;top:0" width="30" height="240"><path d="M10 213.5 L16 219 L10 224.5Z" fill="#000"/></svg>
<div class="r" style="left:2px;top:524px;width:1272px;height:1px;background:#000;"></div>
<div class="r" style="left:24px;top:525px;width:316px;height:19px;background:#c4fcc4;border:1px solid #a0a4a8;border-top:none;"></div>
<div class="r" style="left:164px;top:525px;width:1px;height:18px;background:#a0a4a8;"></div>
<div class="r" style="left:284px;top:525px;width:1px;height:18px;background:#a0a4a8;"></div>
<div class="r" style="left:836px;top:525px;width:77px;height:19px;background:#c4fcc4;border:1px solid #a0a4a8;border-top:none;"></div>
<div class="r" style="left:964px;top:525px;width:135px;height:19px;background:#c4fcc4;border-left:2px solid #6a6a6a;border-bottom:1px solid #e4e4e4;"></div>
<div class="r" style="left:1082px;top:525px;width:17px;height:18px;background:linear-gradient(#f6f6f6,#d6d6d6);border:1px solid #8a8a8a;"></div>
<svg style="left:0;top:0" width="1280" height="1024"><path d="M1087 532.5 L1094.5 532.5 L1090.75 536.5Z" fill="#000"/></svg>
<div class="t" style="left:967px;top:527.50px;font-size:13px;color:#000;font-weight:normal;font-style:normal;">&lt;All&gt;</div>
<div class="r" style="left:28px;top:579px;width:807px;height:365px;background:#fff;border:1px solid #9ea3a9;"></div>
<div class="r" style="left:30px;top:558px;width:108px;height:22px;background:linear-gradient(#f6f6f6,#e6e6e6 50%,#d6d6d6);border:1px solid #9ea3a9;border-bottom:none;"></div>
<div class="t" style="left:36px;top:564.42px;font-size:12.5px;color:#000;font-weight:normal;font-style:normal;">Employee Details</div>
<div class="r" style="left:286px;top:558px;width:510px;height:22px;background:linear-gradient(#f6f6f6,#e6e6e6 50%,#d6d6d6);border:1px solid #9ea3a9;border-bottom:none;border-right:none;"></div>
<div class="t" style="left:290px;top:564.42px;font-size:12.5px;color:#000;font-weight:normal;font-style:normal;">Experience / Education</div>
<div class="t" style="width:60px;text-align:right;left:735px;top:564.42px;font-size:12.5px;color:#000;font-weight:normal;font-style:normal;">Notif</div>
<div class="r" style="left:137px;top:556px;width:149px;height:25px;background:#fff;border:1px solid #9ea3a9;border-bottom:none;"></div>
<div class="t" style="left:145px;top:562.12px;font-size:12.85px;color:#000;font-weight:normal;font-style:normal;">Wage / Position History</div>
<div class="r" style="left:797px;top:558px;width:19px;height:19px;background:linear-gradient(#f4f4f4,#dedede 50%,#cfcfcf);border:1px solid #a9adb2;"></div>
<div class="r" style="left:816px;top:558px;width:19px;height:19px;background:linear-gradient(#f4f4f4,#dedede 50%,#cfcfcf);border:1px solid #a9adb2;"></div>
<svg style="left:0;top:0" width="1280" height="1024"><path d="M808.5 563.5 L805 567 L808.5 570.5Z" fill="#5a6fa8"/><path d="M824 563.5 L827.5 567 L824 570.5Z" fill="#5a6fa8"/></svg>
<div class="r" style="left:53px;top:608px;width:753px;height:257px;background:#fff;border:1px solid #9ea3a9;"></div>
<div class="t" style="left:77px;top:619.42px;font-size:12.5px;color:#ed1c24;font-weight:normal;font-style:normal;">Start Date</div>
<div class="t" style="left:149px;top:619.42px;font-size:12.5px;color:#ed1c24;font-weight:normal;font-style:normal;">End Date</div>
<div class="t" style="left:224px;top:619.42px;font-size:12.5px;color:#ed1c24;font-weight:normal;font-style:normal;">Job Title</div>
<div class="r" style="left:54px;top:636px;width:751px;height:1px;background:#000;"></div>
<div class="r" style="left:54px;top:637px;width:18px;height:59px;background:#e8ebee;"></div>
<div class="r" style="left:72px;top:636px;width:1px;height:60px;background:#000;"></div>
<div class="r" style="left:73px;top:636px;width:712px;height:21px;background:#dcf8f8;"></div>
<div class="r" style="left:73px;top:636px;width:712px;height:1px;background:#a9adb1;"></div>
<div class="r" style="left:73px;top:656px;width:712px;height:1px;background:#a9adb1;"></div>
<div class="r" style="left:148px;top:636px;width:1px;height:21px;background:#a9adb1;"></div>
<div class="r" style="left:224px;top:636px;width:1px;height:21px;background:#a9adb1;"></div>
<div class="r" style="left:384px;top:636px;width:1px;height:21px;background:#a9adb1;"></div>
<div class="r" style="left:585px;top:636px;width:1px;height:21px;background:#a9adb1;"></div>
<div class="r" style="left:648px;top:636px;width:1px;height:21px;background:#a9adb1;"></div>
<div class="r" style="left:716px;top:636px;width:1px;height:21px;background:#a9adb1;"></div>
<div class="r" style="left:784px;top:636px;width:1px;height:21px;background:#a9adb1;"></div>
<div class="r" style="left:73px;top:657px;width:644px;height:20px;background:#dcf8f8;"></div>
<div class="r" style="left:73px;top:676px;width:712px;height:1px;background:#a9adb1;"></div>
<div class="r" style="left:585px;top:657px;width:1px;height:20px;background:#a9adb1;"></div>
<div class="r" style="left:716px;top:657px;width:1px;height:20px;background:#a9adb1;"></div>
<div class="r" style="left:73px;top:677px;width:712px;height:19px;background:#dcf8f8;"></div>
<div class="r" style="left:784px;top:677px;width:1px;height:19px;background:#a9adb1;"></div>
<div class="t" style="width:80px;text-align:right;left:66px;top:640.08px;font-size:12.9px;color:#000;font-weight:normal;font-style:normal;">08/02/2013</div>
<div class="t" style="left:227px;top:640.42px;font-size:12.5px;color:#000;font-weight:normal;font-style:normal;">IT Director</div>
<div class="t" style="left:387px;top:640.42px;font-size:12.5px;color:#000;font-weight:normal;font-style:normal;">IT Management</div>
<div class="t" style="width:70px;text-align:right;left:577px;top:640.08px;font-size:12.9px;color:#000;font-weight:normal;font-style:normal;">125000.00</div>
<div class="t" style="left:650px;top:640.42px;font-size:12.5px;color:#000;font-weight:normal;font-style:normal;">98</div>
<div class="t" style="left:718px;top:640.42px;font-size:12.5px;color:#000;font-weight:normal;font-style:normal;">1</div>
<div class="t" style="left:75px;top:660.33px;font-size:12.6px;color:#000;font-weight:normal;font-style:normal;">Manager: Smith, Mike</div>
<div class="t" style="left:588px;top:660.42px;font-size:12.5px;color:#000;font-weight:normal;font-style:normal;">Annually</div>
<div class="t" style="left:76px;top:680.08px;font-size:12.9px;color:#000;font-weight:normal;font-style:italic;">Comments: Promotion effective 8/2/2013</div>
<div class="r" style="left:54px;top:696px;width:751px;height:1px;background:#000;"></div>
<div class="r" style="left:54px;top:696px;width:751px;height:1px;background:#000;"></div>
<div class="r" style="left:54px;top:697px;width:18px;height:59px;background:#e8ebee;"></div>
<div class="r" style="left:72px;top:696px;width:1px;height:60px;background:#000;"></div>
<div class="r" style="left:73px;top:696px;width:712px;height:21px;background:#dcf8f8;"></div>
<div class="r" style="left:73px;top:696px;width:712px;height:1px;background:#a9adb1;"></div>
<div class="r" style="left:73px;top:716px;width:712px;height:1px;background:#a9adb1;"></div>
<div class="r" style="left:148px;top:696px;width:1px;height:21px;background:#a9adb1;"></div>
<div class="r" style="left:224px;top:696px;width:1px;height:21px;background:#a9adb1;"></div>
<div class="r" style="left:384px;top:696px;width:1px;height:21px;background:#a9adb1;"></div>
<div class="r" style="left:585px;top:696px;width:1px;height:21px;background:#a9adb1;"></div>
<div class="r" style="left:648px;top:696px;width:1px;height:21px;background:#a9adb1;"></div>
<div class="r" style="left:716px;top:696px;width:1px;height:21px;background:#a9adb1;"></div>
<div class="r" style="left:784px;top:696px;width:1px;height:21px;background:#a9adb1;"></div>
<div class="r" style="left:73px;top:717px;width:644px;height:20px;background:#dcf8f8;"></div>
<div class="r" style="left:73px;top:736px;width:712px;height:1px;background:#a9adb1;"></div>
<div class="r" style="left:585px;top:717px;width:1px;height:20px;background:#a9adb1;"></div>
<div class="r" style="left:716px;top:717px;width:1px;height:20px;background:#a9adb1;"></div>
<div class="r" style="left:73px;top:737px;width:712px;height:19px;background:#dcf8f8;"></div>
<div class="r" style="left:784px;top:737px;width:1px;height:19px;background:#a9adb1;"></div>
<div class="t" style="width:80px;text-align:right;left:66px;top:700.08px;font-size:12.9px;color:#000;font-weight:normal;font-style:normal;">08/12/2012</div>
<div class="t" style="width:80px;text-align:right;left:142px;top:700.08px;font-size:12.9px;color:#000;font-weight:normal;font-style:normal;">08/02/2013</div>
<div class="t" style="left:227px;top:700.42px;font-size:12.5px;color:#000;font-weight:normal;font-style:normal;">IT Manager</div>
<div class="t" style="left:387px;top:700.42px;font-size:12.5px;color:#000;font-weight:normal;font-style:normal;">IT Management</div>
<div class="t" style="width:70px;text-align:right;left:577px;top:700.08px;font-size:12.9px;color:#000;font-weight:normal;font-style:normal;">110000.00</div>
<div class="t" style="left:650px;top:700.42px;font-size:12.5px;color:#000;font-weight:normal;font-style:normal;">97</div>
<div class="t" style="left:718px;top:700.42px;font-size:12.5px;color:#000;font-weight:normal;font-style:normal;">1</div>
<div class="t" style="left:75px;top:720.33px;font-size:12.6px;color:#000;font-weight:normal;font-style:normal;">Manager: Jones, Steven</div>
<div class="t" style="left:588px;top:720.42px;font-size:12.5px;color:#000;font-weight:normal;font-style:normal;">Annually</div>
<div class="t" style="left:76px;top:740.08px;font-size:12.9px;color:#000;font-weight:normal;font-style:italic;">Comments: Mike has indicated his interest for the open Director position</div>
<div class="r" style="left:54px;top:756px;width:751px;height:1px;background:#000;"></div>
<svg style="left:0;top:0" width="100" height="700"><path d="M62 639 L68.5 644.5 L62 650Z" fill="#000"/></svg>
<div class="r" style="left:54px;top:840px;width:751px;height:1px;background:#000;"></div>
<div class="t" style="left:572px;top:842.07px;font-size:13.5px;color:#000;font-weight:normal;font-style:normal;">2</div>
<div class="t" style="left:581.5px;top:842.50px;font-size:13px;color:#000;font-weight:normal;font-style:normal;">record(s) found.</div>
<div class="r" style="left:58px;top:882px;width:147px;height:29px;background:linear-gradient(#f6f6f6,#ebebeb 45%,#dddddd 55%,#d2d2d2);border:1px solid #707070;border-radius:3px;box-shadow:inset 0 0 0 1px rgba(255,255,255,.7);"></div>
<div class="t" style="width:147px;text-align:center;left:58.0px;top:890.42px;font-size:12.5px;color:#222;font-weight:normal;font-style:normal;">Add Job History Record</div>
<div class="r" style="left:226px;top:882px;width:151px;height:29px;background:linear-gradient(#e8f4fc,#c6e4f8 50%,#b2daf4);border:1px solid #3c7fb1;border-radius:3px;box-shadow:inset 0 0 0 1px rgba(255,255,255,.7);"></div>
<div class="t" style="width:151px;text-align:center;left:226.0px;top:890.42px;font-size:12.5px;color:#222;font-weight:normal;font-style:normal;">Open Job History Record</div>
<div class="r" style="left:861px;top:549px;width:119px;height:23px;background:linear-gradient(#f6f6f6,#ebebeb 45%,#dddddd 55%,#d2d2d2);border:1px solid #707070;border-radius:3px;box-shadow:inset 0 0 0 1px rgba(255,255,255,.7);"></div>
<div class="t" style="width:119px;text-align:center;left:861.0px;top:554.00px;font-size:13px;color:#000;font-weight:normal;font-style:normal;">Clear Filters</div>
<div class="t" style="left:873px;top:595.57px;font-size:13.5px;color:#000;font-weight:normal;font-style:normal;">11</div>
<div class="t" style="left:889px;top:595.00px;font-size:13px;color:#000;font-weight:normal;font-style:normal;">record(s) found.</div>
<div class="t" style="left:857px;top:629.69px;font-size:11px;color:#ed1c24;font-weight:bold;font-style:normal;">EVALUATION MODE</div>
<div class="r" style="left:885px;top:653px;width:123px;height:23px;background:linear-gradient(#f6f6f6,#ebebeb 45%,#dddddd 55%,#d2d2d2);border:1px solid #707070;border-radius:3px;box-shadow:inset 0 0 0 1px rgba(255,255,255,.7);"></div>
<div class="t" style="width:123px;text-align:center;left:885.0px;top:658.42px;font-size:12.5px;color:#000;font-weight:normal;font-style:normal;">Add Employee</div>
<div class="r" style="left:885px;top:681px;width:123px;height:23px;background:linear-gradient(#f6f6f6,#ebebeb 45%,#dddddd 55%,#d2d2d2);border:1px solid #707070;border-radius:3px;box-shadow:inset 0 0 0 1px rgba(255,255,255,.7);"></div>
<div class="t" style="width:123px;text-align:center;left:885.0px;top:686.42px;font-size:12.5px;color:#000;font-weight:normal;font-style:normal;">Save</div>
<div class="r" style="left:885px;top:709px;width:123px;height:23px;background:linear-gradient(#f6f6f6,#ebebeb 45%,#dddddd 55%,#d2d2d2);border:1px solid #707070;border-radius:3px;box-shadow:inset 0 0 0 1px rgba(255,255,255,.7);"></div>
<div class="t" style="width:123px;text-align:center;left:885.0px;top:714.42px;font-size:12.5px;color:#000;font-weight:normal;font-style:normal;">Close</div>
<div class="r" style="left:931px;top:698px;width:8px;height:1px;background:#222;"></div>
<div class="r" style="left:930px;top:726px;width:8px;height:1px;background:#222;"></div>
<div class="r" style="left:897px;top:769px;width:131px;height:23px;background:linear-gradient(#f6f6f6,#ebebeb 45%,#dddddd 55%,#d2d2d2);border:1px solid #707070;border-radius:3px;box-shadow:inset 0 0 0 1px rgba(255,255,255,.7);"></div>
<div class="t" style="width:131px;text-align:center;left:897.0px;top:775.69px;font-size:11px;color:#000;font-weight:normal;font-style:normal;">BUY NOW</div>
<div class="r" style="left:897px;top:801px;width:131px;height:23px;background:linear-gradient(#f6f6f6,#ebebeb 45%,#dddddd 55%,#d2d2d2);border:1px solid #707070;border-radius:3px;box-shadow:inset 0 0 0 1px rgba(255,255,255,.7);"></div>
<div class="t" style="width:131px;text-align:center;left:897.0px;top:807.35px;font-size:11.4px;color:#000;font-weight:normal;font-style:normal;">Enter License Key</div>
<div class="r" style="left:338px;top:284px;width:448px;height:415px;border:1px solid #5f656d;border-radius:6px 6px 0 0;background:linear-gradient(#eef0f3,#e3e6ea 23px,#e3e6ea);box-shadow:0 0 0 1px rgba(255,255,255,.5) inset;"></div>
<div class="r" style="left:340px;top:308px;width:444px;height:389px;background:#fff;border:1px solid #7d838a;"></div>
<svg style="left:344px;top:292px" width="17" height="15"><rect x="0.5" y="0.5" width="15" height="13" fill="#f4f6fa" stroke="#4b5b7b"/><rect x="0.5" y="0.5" width="15" height="2" fill="#c0305f"/><line x1="2" y1="6" x2="7" y2="6" stroke="#4b5b7b"/><line x1="2" y1="9" x2="7" y2="9" stroke="#4b5b7b"/><rect x="8.5" y="5.5" width="5" height="2" fill="none" stroke="#4b5b7b"/><rect x="8.5" y="8.5" width="5" height="2" fill="none" stroke="#4b5b7b"/></svg>
<div class="t" style="left:364px;top:294.10px;font-size:11.7px;color:#222;font-weight:normal;font-style:normal;">Add Job History Record</div>
<svg style="left:0;top:0" width="1280" height="1024"><path d="M760 296 L769 304 M769 296 L760 304" stroke="#4d535b" stroke-width="3" stroke-linecap="round"/><path d="M760 296 L769 304 M769 296 L760 304" stroke="#fff" stroke-width="1.2" stroke-linecap="round"/></svg>
<div class="r" style="left:435px;top:335px;width:209px;height:21px;background:#d6d6d6;border-top:2px solid #6d6d6d;border-left:2px solid #6d6d6d;border-right:1px solid #e0e0e0;border-bottom:1px solid #e0e0e0;"></div>
<div class="t" style="left:438px;top:339.00px;font-size:13px;color:#000;font-weight:normal;font-style:normal;">Smith, Mike</div>
<div class="r" style="left:435px;top:360px;width:317px;height:20px;background:#fff;border-top:2px solid #6d6d6d;border-left:2px solid #6d6d6d;border-right:1px solid #e0e0e0;border-bottom:1px solid #e0e0e0;"></div>
<div class="t" style="left:438px;top:363.00px;font-size:13px;color:#000;font-weight:normal;font-style:normal;">IT Director</div>
<div class="r" style="left:435px;top:384px;width:105px;height:20px;background:#fff;border-top:2px solid #6d6d6d;border-left:2px solid #6d6d6d;border-right:1px solid #e0e0e0;border-bottom:1px solid #e0e0e0;"></div>
<div class="t" style="width:100px;text-align:right;left:438px;top:387.00px;font-size:13px;color:#000;font-weight:normal;font-style:normal;">125000.00</div>
<div class="r" style="left:655px;top:384px;width:97px;height:20px;background:#fff;border-top:2px solid #6d6d6d;border-left:2px solid #6d6d6d;border-right:1px solid #e0e0e0;border-bottom:1px solid #e0e0e0;"></div>
<div class="t" style="left:658px;top:387.00px;font-size:13px;color:#000;font-weight:normal;font-style:normal;">98</div>
<div class="r" style="left:435px;top:408px;width:105px;height:20px;background:#fff;border-top:2px solid #6d6d6d;border-left:2px solid #6d6d6d;border-right:1px solid #e0e0e0;border-bottom:1px solid #e0e0e0;"></div>
<div class="t" style="left:438px;top:411.00px;font-size:13px;color:#000;font-weight:normal;font-style:normal;">Annually</div>
<div class="r" style="left:522px;top:410px;width:16px;height:17px;background:linear-gradient(#f2f2f2,#d4d4d4);border:1px solid #707070;"></div>
<svg style="left:0;top:0" width="1280" height="1024"><path d="M526.5 417.0 L533.5 417.0 L530.0 420.5Z" fill="#000"/></svg>
<div class="r" style="left:655px;top:408px;width:97px;height:20px;background:#fff;border-top:2px solid #6d6d6d;border-left:2px solid #6d6d6d;border-right:1px solid #e0e0e0;border-bottom:1px solid #e0e0e0;"></div>
<div class="t" style="left:658px;top:411.00px;font-size:13px;color:#000;font-weight:normal;font-style:normal;">1</div>
<div class="r" style="left:435px;top:440px;width:73px;height:20px;background:#fff;border-top:2px solid #6d6d6d;border-left:2px solid #6d6d6d;border-right:1px solid #e0e0e0;border-bottom:1px solid #e0e0e0;"></div>
<div class="t" style="left:440px;top:443.00px;font-size:13px;color:#000;font-weight:normal;font-style:normal;">08/02/2013</div>
<div class="r" style="left:583px;top:440px;width:73px;height:20px;background:#fff;border-top:2px solid #6d6d6d;border-left:2px solid #6d6d6d;border-right:1px solid #e0e0e0;border-bottom:1px solid #e0e0e0;"></div>
<div class="r" style="left:435px;top:464px;width:237px;height:20px;background:#fff;border-top:2px solid #6d6d6d;border-left:2px solid #6d6d6d;border-right:1px solid #e0e0e0;border-bottom:1px solid #e0e0e0;"></div>
<div class="t" style="left:438px;top:467.00px;font-size:13px;color:#000;font-weight:normal;font-style:normal;">IT Management</div>
<div class="r" style="left:654px;top:466px;width:16px;height:17px;background:linear-gradient(#f2f2f2,#d4d4d4);border:1px solid #707070;"></div>
<svg style="left:0;top:0" width="1280" height="1024"><path d="M658.5 473.0 L665.5 473.0 L662.0 476.5Z" fill="#000"/></svg>
<div class="r" style="left:435px;top:488px;width:204px;height:20px;background:#fff;border-top:2px solid #6d6d6d;border-left:2px solid #6d6d6d;border-right:1px solid #e0e0e0;border-bottom:1px solid #e0e0e0;"></div>
<div class="t" style="left:438px;top:491.00px;font-size:13px;color:#000;font-weight:normal;font-style:normal;">Smith, Mike</div>
<div class="r" style="left:622px;top:490px;width:17px;height:17px;background:linear-gradient(#e6f3fc,#bcdff7);border:1px solid #3c7fb1;"></div>
<svg style="left:0;top:0" width="1280" height="1024"><path d="M627.0 497.0 L634.0 497.0 L630.5 500.5Z" fill="#000"/></svg>
<div class="r" style="left:435px;top:512px;width:288px;height:115px;background:#00ff00;border-top:2px solid #6d6d6d;border-left:2px solid #6d6d6d;"></div>
<div class="t" style="left:438px;top:515.00px;font-size:13px;color:#000;font-weight:normal;font-style:normal;">Promotion effective 8/2/2013</div>
<div class="r" style="left:604px;top:514px;width:1px;height:14px;background:#cc2a8a;"></div>
<div class="t" style="left:438px;top:547.33px;font-size:12.6px;color:#000;font-weight:normal;font-style:normal;">Received 10% Bonus</div>
<div class="t" style="left:438px;top:579.00px;font-size:13px;color:#000;font-weight:normal;font-style:normal;">See additional incentive details in docs tab</div>
<div class="t" style="width:120px;text-align:right;left:308px;top:339.42px;font-size:12.5px;color:#000;font-weight:normal;font-style:normal;">Employee:</div>
<div class="t" style="width:120px;text-align:right;left:310px;top:362.74px;font-size:13.3px;color:#000;font-weight:normal;font-style:normal;">Job Title:</div>
<div class="t" style="width:120px;text-align:right;left:310px;top:387.16px;font-size:12.8px;color:#000;font-weight:normal;font-style:normal;">Wage:</div>
<div class="t" style="width:120px;text-align:right;left:305px;top:411.16px;font-size:12.8px;color:#000;font-weight:normal;font-style:normal;">Type:</div>
<div class="t" style="width:120px;text-align:right;left:530px;top:387.16px;font-size:12.8px;color:#000;font-weight:normal;font-style:normal;">Band:</div>
<div class="t" style="width:120px;text-align:right;left:531px;top:411.16px;font-size:12.8px;color:#000;font-weight:normal;font-style:normal;">Step:</div>
<div class="t" style="width:120px;text-align:right;left:311px;top:443.08px;font-size:12.9px;color:#000;font-weight:normal;font-style:normal;">Start Date:</div>
<div class="t" style="width:120px;text-align:right;left:457px;top:443.42px;font-size:12.5px;color:#000;font-weight:normal;font-style:normal;">End Date:</div>
<div class="t" style="width:120px;text-align:right;left:308px;top:467.08px;font-size:12.9px;color:#000;font-weight:normal;font-style:normal;">Department:</div>
<div class="t" style="width:120px;text-align:right;left:308px;top:491.08px;font-size:12.9px;color:#000;font-weight:normal;font-style:normal;">Manager:</div>
<div class="t" style="width:120px;text-align:right;left:310px;top:515.25px;font-size:12.7px;color:#000;font-weight:normal;font-style:normal;">Comments:</div>
<div class="r" style="left:525px;top:653px;width:115px;height:23px;background:linear-gradient(#f6f6f6,#ebebeb 45%,#dddddd 55%,#d2d2d2);border:1px solid #707070;border-radius:3px;box-shadow:inset 0 0 0 1px rgba(255,255,255,.7);"></div>
<div class="t" style="width:115px;text-align:center;left:525.0px;top:658.42px;font-size:12.5px;color:#000;font-weight:normal;font-style:normal;">Save and Close</div>
<div class="r" style="left:657px;top:653px;width:95px;height:23px;background:linear-gradient(#f6f6f6,#ebebeb 45%,#dddddd 55%,#d2d2d2);border:1px solid #707070;border-radius:3px;box-shadow:inset 0 0 0 1px rgba(255,255,255,.7);"></div>
<div class="t" style="width:95px;text-align:center;left:657.0px;top:658.16px;font-size:12.8px;color:#000;font-weight:normal;font-style:normal;">Cancel</div>
<svg style="left:614px;top:518px" width="14" height="22"><path d="M0.5 0.5 L0.5 16 L4 12.5 L6.5 18.5 L9 17.5 L6.5 11.5 L11 11.5Z" fill="#fff" stroke="#000" stroke-width="1"/></svg>
<div class="r" style="left:0px;top:961px;width:1280px;height:1px;background:#c9ccd1;"></div>
<div class="r" style="left:0px;top:962px;width:1280px;height:22px;background:linear-gradient(#eceef1,#dfe2e6 50%,#d3d7dc);border-top:1px solid #aeb3b9;"></div>
<div class="r" style="left:638px;top:964px;width:1px;height:19px;background:#9aa0a7;"></div>
<div class="t" style="left:8px;top:967.27px;font-size:11.5px;color:#333;font-weight:normal;font-style:normal;">Form View</div>
<div class="t" style="left:1218px;top:967.52px;font-size:11.2px;color:#333;font-weight:normal;font-style:normal;">Num Lock</div>
<div class="r" style="left:0px;top:984px;width:1280px;height:40px;background:linear-gradient(90deg,#7b95b4 0px,#8fa8c6 50px,#a7bfdb 110px,#a7bfdb 950px,#8ea5c0 1060px,#7e94ae 1200px,#7e94ae 1280px);border-top:1px solid #5b6e85;"></div>
<div class="r" style="left:121px;top:985px;width:59px;height:39px;background:linear-gradient(rgba(255,255,255,.55),rgba(255,255,255,.25));border:1px solid #5f7389;border-radius:3px;box-shadow:inset 0 0 0 1px rgba(255,255,255,.6);"></div>
<div class="r" style="left:307px;top:985px;width:58px;height:39px;background:linear-gradient(rgba(255,255,255,.55),rgba(255,255,255,.25));border:1px solid #5f7389;border-radius:3px;box-shadow:inset 0 0 0 1px rgba(255,255,255,.6);"></div>
<div class="r" style="left:369px;top:985px;width:59px;height:39px;background:linear-gradient(rgba(255,255,255,.55),rgba(255,255,255,.25));border:1px solid #5f7389;border-radius:3px;box-shadow:inset 0 0 0 1px rgba(255,255,255,.6);"></div>
<div class="r" style="left:432px;top:985px;width:58px;height:39px;background:linear-gradient(rgba(255,255,255,.55),rgba(255,255,255,.25));border:1px solid #5f7389;border-radius:3px;box-shadow:inset 0 0 0 1px rgba(255,255,255,.6);"></div>
<div class="r" style="left:1265px;top:985px;width:15px;height:39px;background:linear-gradient(90deg,#5d6e82,#8e9fb3);border-left:1px solid #4d5d70;"></div>
<svg style="left:0;top:0" width="1280" height="1024">
<defs>
<linearGradient id="orb2" x1="0" y1="0" x2="0" y2="1"><stop offset="0" stop-color="#a8c4dc"/><stop offset="0.45" stop-color="#3a6a98"/><stop offset="0.55" stop-color="#0c4a88"/><stop offset="0.85" stop-color="#1a78c0"/><stop offset="1" stop-color="#28c8f4"/></linearGradient><radialGradient id="orb" cx="50%" cy="35%" r="65%"><stop offset="0" stop-color="#6fb9ea"/><stop offset="0.6" stop-color="#1e5fa7"/><stop offset="1" stop-color="#0c3566"/></radialGradient>
<radialGradient id="globe" cx="40%" cy="40%" r="60%"><stop offset="0" stop-color="#7fd0f8"/><stop offset="0.6" stop-color="#2a6ac8"/><stop offset="1" stop-color="#1a3a8a"/></radialGradient><radialGradient id="robo" cx="40%" cy="35%" r="65%"><stop offset="0" stop-color="#f4f4f4"/><stop offset="0.7" stop-color="#a8acb0"/><stop offset="1" stop-color="#6a6e72"/></radialGradient><radialGradient id="ff" cx="55%" cy="45%" r="60%"><stop offset="0" stop-color="#ffd54a"/><stop offset="0.5" stop-color="#f07a1c"/><stop offset="1" stop-color="#c33b16"/></radialGradient>
</defs>
<circle cx="27" cy="1003.5" r="18" fill="url(#orb2)" stroke="#2a4a70" stroke-width="0.8"/>
<ellipse cx="27" cy="995" rx="14" ry="9" fill="#ffffff" opacity="0.35"/>
<path d="M18 994 q5 -3 10 -1 l-1.5 9 q-5 -2 -10 1z" fill="#f0642a"/>
<path d="M29 993.5 q5 2 10 -1 l-1.5 9.5 q-5 3 -10 1z" fill="#8cc83a"/>
<path d="M16.3 1004 q5 -3 10 -1 l-1.5 9 q-5 -2 -10 1z" fill="#2aa2e8"/>
<path d="M27.3 1003.5 q5 2 10 -1 l-1.5 9.5 q-5 3 -10 1z" fill="#f8c02a"/>
<!-- firefox -->
<circle cx="89" cy="1004" r="15" fill="#e8601a"/>
<circle cx="91.5" cy="1001.5" r="11.5" fill="url(#globe)"/>
<path d="M101 994 q6 8 1 18 q-2 -8 -3 -10z" fill="#f8c020"/>
<path d="M76 996 q2 -6 5 -7 q-1 3 0 5 q3 -2 7 -1 q-5 3 -5 8 q0 8 9 9 q7 0 12 -5 q-3 10 -13 12 q-12 1 -16 -9 q-2 -6 1 -12z" fill="#e8661c"/>
<path d="M84 1011 q8 3 14 -2" fill="none" stroke="#c84a10" stroke-width="1"/>
<!-- folder -->
<path d="M136 993 h9 l2 2 h19 v24 h-30z" fill="#e9cf7a" stroke="#b9953c"/>
<rect x="136" y="999" width="30" height="20" fill="#f8e6a6" stroke="#c9a54a"/>
<rect x="140" y="991" width="4" height="3" fill="#3bb34a"/><rect x="148" y="993" width="4" height="3" fill="#d23a2a"/><rect x="155" y="996" width="4" height="3" fill="#2a8ad2"/>
<path d="M140 1020 v-9 h22 v9 h-5 v-5 h-12 v5z" fill="#9fd4f4" stroke="#4a90c8"/>
<!-- media player -->
<rect x="203" y="993" width="22" height="24" fill="#c2dcf2" stroke="#6aa0cc"/>
<rect x="199" y="993" width="22" height="24" fill="#d4e8f8" stroke="#6aa0cc"/>
<circle cx="210" cy="1004" r="9" fill="#f47a20" stroke="#d65a10"/>
<path d="M207 999 L215 1004 L207 1009z" fill="#fff"/>
<!-- robot -->
<circle cx="275.5" cy="1005" r="12" fill="url(#robo)" stroke="#5d6268"/>
<path d="M276 993 v2" stroke="#888" stroke-width="2"/>
<circle cx="276" cy="991" r="2.5" fill="#f4e8b0" stroke="#999"/>
<ellipse cx="270" cy="1003" rx="3.5" ry="3" fill="#fff" stroke="#333"/><ellipse cx="280" cy="1003" rx="3.5" ry="3" fill="#fff" stroke="#333"/>
<circle cx="271" cy="1003" r="1.5" fill="#000"/><circle cx="281" cy="1003" r="1.5" fill="#000"/>
<path d="M274 1010 h3 v3 h-3z" fill="#fff"/>
<!-- person -->
<path d="M325 1020 q0 -13 11 -13 q11 0 11 13z" fill="#4a7ac0"/>
<path d="M333 1007 l3 7 l3 -7z" fill="#e8f0f8"/>
<path d="M328 1001 q-1 -12 8 -12 q9 0 8 12 q-1 4 -3 5 h-10 q-2 -1 -3 -5z" fill="#c98a2a"/>
<ellipse cx="336" cy="999" rx="4.5" ry="5.5" fill="#f6d2a8"/>
<path d="M342 996 q3 4 -2 8" fill="none" stroke="#333" stroke-width="1"/>
<!-- IE -->
<ellipse cx="399" cy="1003" rx="16" ry="7" transform="rotate(-40 399 1003)" fill="none" stroke="#f2c318" stroke-width="2.4"/>
<text x="386" y="1016" font-family="Liberation Sans" font-size="40" font-weight="bold" fill="#29a0e8" stroke="#1a78c8" stroke-width="0.6">e</text>
<!-- access -->
<rect x="446" y="989" width="29" height="29" fill="#f9c6da" stroke="#c0306a"/>
<rect x="446" y="989" width="29" height="4" fill="#e05a90"/>
<text x="447" y="1013" font-family="Liberation Sans" font-size="22" font-weight="bold" fill="#b0164e">A</text>
<circle cx="468" cy="1003" r="5.5" fill="#fff" stroke="#d48aa8"/>
<path d="M464 1007 l-6 6 M460 1011 l2 2" stroke="#fff" stroke-width="2.5"/>
<!-- tray -->
<path d="M1078 1008 L1082.5 1003.5 L1087 1008z" fill="#fff"/>
<rect x="1100" y="999" width="15" height="12" fill="#555c63"/>
<path d="M1100 998 L1115 1012 M1115 998 L1100 1012" stroke="#d42020" stroke-width="1.3"/>
<path d="M1124 997 v15" stroke="#fff" stroke-width="1.5"/><path d="M1125 997 h9 l-2 4 l2 4 h-9z" fill="#fff"/>
<circle cx="1134" cy="1007" r="4.5" fill="#d62020"/><path d="M1132 1005 l4 4 M1136 1005 l-4 4" stroke="#fff" stroke-width="1.3"/>
<rect x="1152" y="1000" width="12" height="9" fill="#4b5563" stroke="#fff" stroke-width="1.3"/>
<path d="M1149 996 v14 h8" fill="none" stroke="#fff" stroke-width="1.3"/>
<path d="M1172 1001 h3 l4 -4 v15 l-4 -4 h-3z" fill="#fff"/>
<path d="M1182 1001 q3 3.5 0 7 M1185 999 q5 5.5 0 11" fill="none" stroke="#fff" stroke-width="1.2"/>
</svg>
<div class="t" style="left:1208px;top:991.27px;font-size:11.5px;color:#fff;font-weight:normal;font-style:normal;">3:07 PM</div>
<div class="t" style="left:1204px;top:1008.27px;font-size:11.5px;color:#fff;font-weight:normal;font-style:normal;">2/22/2014</div>
<div class="t" style="left:25px;top:119.84px;font-size:12px;color:#5f6a80;font-weight:normal;font-style:normal;">Clipboard</div>
<div class="t" style="left:166px;top:120.10px;font-size:11.7px;color:#5f6a80;font-weight:normal;font-style:normal;">Sort &amp; Filter</div>
<div class="t" style="left:366px;top:120.77px;font-size:10.9px;color:#5f6a80;font-weight:normal;font-style:normal;">Records</div>
<div class="t" style="left:528px;top:120.43px;font-size:11.3px;color:#5f6a80;font-weight:normal;font-style:normal;">Find</div>
<div class="t" style="left:635px;top:120.43px;font-size:11.3px;color:#5f6a80;font-weight:normal;font-style:normal;">Window</div>
<div class="t" style="left:842px;top:120.18px;font-size:11.6px;color:#5f6a80;font-weight:normal;font-style:normal;">Text Formatting</div>
<div class="t" style="left:11px;top:90.44px;font-size:10.7px;color:#a3a3a3;font-weight:normal;font-style:normal;">Paste</div>
<div class="t" style="left:68px;top:55.93px;font-size:11.3px;color:#a3a3a3;font-weight:normal;font-style:normal;">Cut</div>
<div class="t" style="left:68px;top:77.93px;font-size:11.3px;color:#a3a3a3;font-weight:normal;font-style:normal;">Copy</div>
<div class="t" style="left:129px;top:56.19px;font-size:11px;color:#a3a3a3;font-weight:normal;font-style:normal;">Remove Sort</div>
<div class="t" style="left:129px;top:77.85px;font-size:11.4px;color:#a3a3a3;font-weight:normal;font-style:normal;">Selection</div>
<div class="t" style="left:219px;top:77.60px;font-size:11.7px;color:#a3a3a3;font-weight:normal;font-style:normal;">Toggle Filter</div>
<div class="t" style="left:129px;top:100.02px;font-size:11.2px;color:#2e2e2e;font-weight:normal;font-style:normal;">Advanced</div>
<div class="t" style="left:298px;top:90.10px;font-size:11.1px;color:#2e2e2e;font-weight:normal;font-style:normal;">Refresh</div>
<div class="t" style="left:307px;top:101.93px;font-size:11.3px;color:#2e2e2e;font-weight:normal;font-style:normal;">All</div>
<div class="t" style="left:362px;top:55.93px;font-size:11.3px;color:#a3a3a3;font-weight:normal;font-style:normal;">New</div>
<div class="t" style="left:362px;top:77.93px;font-size:11.3px;color:#2e2e2e;font-weight:normal;font-style:normal;">Save</div>
<div class="t" style="left:362px;top:99.93px;font-size:11.3px;color:#a3a3a3;font-weight:normal;font-style:normal;">Delete</div>
<div class="t" style="left:431px;top:64.77px;font-size:11.5px;color:#2e2e2e;font-weight:normal;font-style:normal;">Spelling</div>
<div class="t" style="left:431px;top:92.93px;font-size:11.3px;color:#a3a3a3;font-weight:normal;font-style:normal;">More</div>
<div class="t" style="left:495px;top:89.93px;font-size:11.3px;color:#2e2e2e;font-weight:normal;font-style:normal;">Find</div>
<div class="t" style="left:550px;top:56.44px;font-size:10.7px;color:#2e2e2e;font-weight:normal;font-style:normal;">Replace</div>
<div class="t" style="left:550px;top:77.93px;font-size:11.3px;color:#2e2e2e;font-weight:normal;font-style:normal;">Go To</div>
<div class="t" style="left:550px;top:99.93px;font-size:11.3px;color:#2e2e2e;font-weight:normal;font-style:normal;">Select</div>
<div class="t" style="left:609px;top:89.93px;font-size:11.3px;color:#a3a3a3;font-weight:normal;font-style:normal;">Size to</div>
<div class="t" style="left:605px;top:101.93px;font-size:11.3px;color:#a3a3a3;font-weight:normal;font-style:normal;">Fit Form</div>
<div class="t" style="left:663px;top:89.93px;font-size:11.3px;color:#2e2e2e;font-weight:normal;font-style:normal;">Switch</div>
<div class="t" style="left:652px;top:101.60px;font-size:11.7px;color:#2e2e2e;font-weight:normal;font-style:normal;">Windows</div>
<svg style="left:0;top:0" width="1280" height="140">
<!-- paste -->
<rect x="12.5" y="55.5" width="23" height="25" rx="2" fill="#d9d9dc" stroke="#b5b5b8"/>
<rect x="17.5" y="53.5" width="13" height="5" rx="1.5" fill="#eee" stroke="#aaa"/>
<path d="M21.5 65.5 h12 l4 4 v13.5 h-16z" fill="#f3eff2" stroke="#b8b4b8"/>
<path d="M24 70 h9 M24 73 h11 M24 76 h11 M24 79 h11" stroke="#cfcfd4"/>
<path d="M22 106 h5 l-2.5 3z" fill="#b0b0b0"/>
<!-- cut -->
<path d="M53 54 L58 64 M61 54 L56 64" stroke="#a8a8a8" stroke-width="1.3"/>
<circle cx="54.5" cy="65.5" r="2.3" fill="none" stroke="#a8a8a8" stroke-width="1.3"/><circle cx="59.5" cy="65.5" r="2.3" fill="none" stroke="#a8a8a8" stroke-width="1.3"/>
<!-- copy -->
<path d="M49.5 76.5 h7 l2 2 v8 h-9z" fill="#f2f2f2" stroke="#a5a5a5"/>
<path d="M55.5 79.5 h6 l2.5 2.5 v7 h-8.5z" fill="#f2f2f2" stroke="#a5a5a5"/>
<!-- remove sort -->
<text x="110" y="60" font-family="Liberation Serif" font-size="8" fill="#8a8a8a">A</text>
<text x="110" y="68" font-family="Liberation Serif" font-size="8" fill="#8a8a8a">Z</text>
<path d="M115 65 l6 -5 q4 -2 5 2 l-6 6 q-4 2 -5 -3z" fill="#e6e6e6" stroke="#9a9a9a"/>
<!-- selection -->
<path d="M110.5 76.5 h12 l-4.5 5 v5 l-3 -2 v-3z" fill="#d0d0d0" stroke="#9a9a9a"/>
<path d="M124 79 l-5 6 h3 l-4 6" fill="none" stroke="#a0a0a0" stroke-width="1.2"/>
<!-- toggle filter -->
<path d="M201.5 77.5 h13 l-5 5.5 v5.5 l-3 -2 v-3.5z" fill="#d0d0d0" stroke="#9a9a9a"/>
<!-- advanced -->
<rect x="114.5" y="100.5" width="11" height="10" fill="#fff" stroke="#3c5a8c"/>
<rect x="114.5" y="100.5" width="11" height="2" fill="#4a7ac8"/>
<path d="M117 108 h1 M119 108 h1 M121 108 h1" stroke="#222"/>
<path d="M110.5 97.5 h8 l-3 3.5 v5 l-2 -1.5 v-3.5z" fill="#333" stroke="#222"/>
<path d="M183 103.5 h5 l-2.5 3z" fill="#444"/>
<path d="M180 81.5 h5 l-2.5 3z" fill="#b0b0b0"/>
<!-- refresh -->
<path d="M304.5 55.5 h14 l4 4 v19 h-18z" fill="#fff" stroke="#8a9ab0"/>
<path d="M307.5 58.5 h14 l4 4 v19 h-18z" fill="#fff" stroke="#8a9ab0"/>
<path d="M310.5 61.5 h14 l5 5 v18 h-19z" fill="#fff" stroke="#7d8ea6"/>
<path d="M314 72 a6 6 0 0 1 11 -3" fill="none" stroke="#2e9e3a" stroke-width="2.5"/>
<path d="M326 74 a6 6 0 0 1 -11 3" fill="none" stroke="#2e9e3a" stroke-width="2.5"/>
<path d="M323 66 l4 3 l-4 2z" fill="#2e9e3a"/><path d="M317 80 l-4 -3 l4 -2z" fill="#2e9e3a"/>
<path d="M323 106.5 h5 l-2.5 3z" fill="#444"/>
<!-- new -->
<rect x="343.5" y="60.5" width="13" height="6" fill="#e4e4e4" stroke="#aaa"/>
<path d="M345 63.5 h9" stroke="#c4c4c4" stroke-width="1.5"/>
<path d="M356 54 v6 M353 57 h6 M354 55 l4 4 M358 55 l-4 4" stroke="#c8c8c8"/>
<!-- save -->
<rect x="343.5" y="82.5" width="12" height="6" fill="#5a8ad8" stroke="#1e3a78"/>
<rect x="351.5" y="77.5" width="8" height="8" fill="#4a5ab0" stroke="#2a2a6a"/>
<rect x="353" y="78" width="5" height="3" fill="#e8e8f8"/>
<rect x="354" y="82.5" width="3" height="2.5" fill="#222"/>
<!-- delete -->
<path d="M345 98 L357 110 M357 98 L345 110" stroke="#a0a0a0" stroke-width="1.8"/>
<path d="M400 103.5 h5 l-2.5 3z" fill="#888"/>
<!-- spelling -->
<text x="411" y="69" font-family="Liberation Sans" font-size="7" font-weight="bold" fill="#222">ABC</text>
<path d="M414 72 l4 4 l10 -9" fill="none" stroke="#3b6dc8" stroke-width="2.2"/>
<!-- more -->
<rect x="412.5" y="89.5" width="15" height="15" fill="#f0f0f0" stroke="#a8a8a8"/>
<rect x="413" y="90" width="14" height="3" fill="#c8c8c8"/>
<rect x="413" y="96" width="14" height="2" fill="#d8d8d8"/>
<path d="M413 93.5 h14 M413 98.5 h14 M413 101.5 h14 M417.5 90 v14 M422.5 90 v14" stroke="#b8b8b8"/>
<path d="M462 100.5 h5 l-2.5 3z" fill="#b0b0b0"/>
<!-- find binoculars -->
<defs><linearGradient id="bino" x1="0" x2="1"><stop offset="0" stop-color="#6f8cc4"/><stop offset="0.35" stop-color="#b8c8e8"/><stop offset="1" stop-color="#34548e"/></linearGradient></defs>
<rect x="499.5" y="56.5" width="5" height="5" rx="1" fill="url(#bino)" stroke="#3a5288" stroke-width="0.8"/>
<rect x="508.5" y="56.5" width="5" height="5" rx="1" fill="url(#bino)" stroke="#3a5288" stroke-width="0.8"/>
<rect x="495.5" y="60.5" width="10" height="9" rx="1.5" fill="url(#bino)" stroke="#3a5288" stroke-width="0.8"/>
<rect x="506.5" y="60.5" width="10" height="9" rx="1.5" fill="url(#bino)" stroke="#3a5288" stroke-width="0.8"/>
<rect x="503" y="63" width="6" height="6" fill="#2a4478"/>
<rect x="492.5" y="68.5" width="12" height="11.5" rx="2" fill="url(#bino)" stroke="#2e4a80" stroke-width="0.8"/>
<rect x="507.5" y="68.5" width="12" height="11.5" rx="2" fill="url(#bino)" stroke="#2e4a80" stroke-width="0.8"/>
<!-- replace -->
<text x="531" y="60" font-family="Liberation Sans" font-size="8" fill="#333">a</text>
<text x="537" y="60" font-family="Liberation Sans" font-size="8" fill="#333">b</text>
<text x="537" y="69" font-family="Liberation Sans" font-size="8" font-weight="bold" fill="#2e8b3a">ac</text>
<path d="M533 62 v4 h3" fill="none" stroke="#333"/>
<!-- go to -->
<path d="M533 81 h7 v-3 l6 5 l-6 5 v-3 h-7z" fill="#3a7ad8" stroke="#2458a8"/>
<path d="M586 81.5 h5 l-2.5 3z" fill="#444"/>
<!-- select cursor -->
<path d="M534.5 97.5 v13 l3 -3 l2.5 5 l2 -1 l-2.5 -5 h4z" fill="#fff" stroke="#333"/>
<path d="M586 103.5 h5 l-2.5 3z" fill="#444"/>
<!-- size to fit -->
<rect x="610.5" y="53.5" width="31" height="29" fill="#f0f0f0" stroke="#c0c0c0" stroke-dasharray="2 1"/>
<rect x="610.5" y="53.5" width="31" height="3" fill="#c8c8c8"/>
<rect x="613.5" y="59.5" width="10" height="12" fill="#e4e4e4" stroke="#a8a8a8"/>
<circle cx="618.5" cy="64" r="2.5" fill="none" stroke="#a0a0a0"/>
<path d="M626 63 h6 M626 66 h6 M613 76 h10 M625 76 h12" stroke="#b0b0b0" stroke-width="1.5"/>
<!-- switch windows -->
<rect x="666.5" y="56.5" width="13" height="11" fill="#fff" stroke="#777"/>
<rect x="682.5" y="56.5" width="13" height="11" fill="#fff" stroke="#777"/>
<rect x="666.5" y="69.5" width="13" height="11" fill="#fff" stroke="#777"/>
<path d="M667 58 h12 M683 58 h12 M667 71 h12" stroke="#999"/>
<rect x="677.5" y="65.5" width="13" height="12" fill="#e0ecfc" stroke="#4a6aa8"/>
<rect x="677.5" y="65.5" width="13" height="2" fill="#3a6ad0"/>
<path d="M705 107.5 h5 l-2.5 3z" fill="#444"/>
<!-- text formatting combos -->
<rect x="721.5" y="58.5" width="138" height="21" fill="#fafbfc" stroke="#dadde2"/>
<rect x="860.5" y="58.5" width="54" height="21" fill="#fafbfc" stroke="#dadde2"/>
<path d="M849 67.5 h6 l-3 3.5z" fill="#555"/>
<path d="M904 67.5 h6 l-3 3.5z" fill="#555"/>
<!-- bullets -->
<circle cx="921.5" cy="63" r="1.2" fill="#888"/><circle cx="921.5" cy="68" r="1.2" fill="#888"/><circle cx="921.5" cy="73" r="1.2" fill="#888"/>
<path d="M925 63 h8 M925 68 h8 M925 73 h8" stroke="#888" stroke-width="1.3"/>
<text x="941" y="65" font-family="Liberation Sans" font-size="5" fill="#999">1</text><text x="941" y="70" font-family="Liberation Sans" font-size="5" fill="#999">2</text><text x="941" y="75" font-family="Liberation Sans" font-size="5" fill="#999">3</text>
<path d="M947 63 h9 M947 68 h9 M947 73 h9" stroke="#888" stroke-width="1.3"/>
<path d="M964.5 59 v17 M1018.5 59 v17" stroke="#dde0e4"/>
<!-- indent -->
<path d="M976 62 h13 M980 65 h9 M980 68 h9 M980 71 h9 M976 74 h13" stroke="#888" stroke-width="1.3"/>
<path d="M973 66 l4 2 l-4 2" fill="none" stroke="#999"/>
<path d="M998 62 h13 M1002 65 h9 M1002 68 h9 M1002 71 h9 M998 74 h13" stroke="#888" stroke-width="1.3"/>
<path d="M999 66 l-4 2 l4 2" fill="none" stroke="#999"/>
<!-- pilcrow -->
<path d="M1029 65 l4 3.5 l-4 3.5z" fill="#aaa"/>
<text x="1033" y="73" font-family="Liberation Sans" font-size="10" font-weight="bold" fill="#999">¶</text>
<path d="M1048 67.5 h5 l-2.5 3z" fill="#bbb"/>
<!-- row2 -->
<text x="727" y="102" font-family="Liberation Serif" font-size="13" font-weight="bold" fill="#888">B</text>
<text x="751" y="102" font-family="Liberation Serif" font-size="13" font-style="italic" fill="#888">I</text>
<text x="773" y="102" font-family="Liberation Serif" font-size="13" fill="#888">U</text>
<path d="M773 104.5 h11" stroke="#888"/>
<path d="M795.5 89 v17 M905.5 89 v17 M983.5 89 v17 M1024.5 89 v17" stroke="#dde0e4"/>
<text x="805" y="102" font-family="Liberation Serif" font-size="14" font-weight="bold" fill="#999">A</text>
<path d="M824 96.5 h5 l-2.5 3z" fill="#bbb"/>
<text x="836" y="98" font-family="Liberation Sans" font-size="9" fill="#999">ab</text>
<path d="M848 101 l8 -8 l2 2 l-8 8z" fill="none" stroke="#aaa"/>
<path d="M862 96.5 h5 l-2.5 3z" fill="#bbb"/>
<path d="M874 94 l5 -5 l6 6 l-5 5z" fill="#f4f4f4" stroke="#999"/>
<path d="M885 96 q2 3 0 5" fill="none" stroke="#999"/>
<rect x="871" y="102" width="16" height="3" fill="#ddd"/>
<path d="M892 96.5 h5 l-2.5 3z" fill="#bbb"/>
<path d="M915 92.5 h14 M915 95.5 h11 M915 98.5 h14 M915 101.5 h11 M915 104 h14" stroke="#888" stroke-width="1.2"/>
<path d="M938 92.5 h14 M940 95.5 h10 M938 98.5 h14 M940 101.5 h10 M938 104 h14" stroke="#888" stroke-width="1.2"/>
<path d="M961 92.5 h14 M964 95.5 h11 M961 98.5 h14 M964 101.5 h11 M961 104 h14" stroke="#888" stroke-width="1.2"/>
<rect x="992.5" y="90.5" width="15" height="15" fill="none" stroke="#999"/>
<path d="M992.5 95.5 h15 M992.5 100.5 h15 M997.5 90.5 v15 M1002.5 90.5 v15" stroke="#999"/>
<path d="M1012 96.5 h5 l-2.5 3z" fill="#bbb"/>
<rect x="1033.5" y="90.5" width="15" height="9" fill="#f0e8ee" stroke="#aaa"/>
<path d="M1033.5 93.5 h15 M1033.5 96.5 h15 M1038.5 90.5 v9 M1043.5 90.5 v9" stroke="#ccc"/>
<rect x="1033" y="102" width="16" height="3" fill="#aaa"/>
<path d="M1054 96.5 h5 l-2.5 3z" fill="#bbb"/>
<rect x="1055.5" y="123.5" width="6" height="6" fill="none" stroke="#bbb"/>
<path d="M1057 125 l4 4" stroke="#999"/>
<!-- quick access toolbar -->
<path d="M34 8.5 h3 a4.5 4 0 0 1 0 8 h-1" fill="none" stroke="#a6a6a6" stroke-width="2.6"/>
<path d="M29.5 8.5 l5.5 -4.5 v9z" fill="#a6a6a6"/>
<path d="M48 10.5 h4 l-2 2.5z" fill="#a6a6a6"/>
<path d="M68 8.5 h-3 a4.5 4 0 0 0 0 8 h1" fill="none" stroke="#a6a6a6" stroke-width="2.6"/>
<path d="M72.5 8.5 l-5.5 -4.5 v9z" fill="#a6a6a6"/>
<path d="M80 10.5 h4 l-2 2.5z" fill="#a6a6a6"/>
<path d="M97 9 h6" stroke="#111" stroke-width="1.3"/><path d="M97 11 h6 l-3 3z" fill="#111"/>
</svg>
</body></html>
